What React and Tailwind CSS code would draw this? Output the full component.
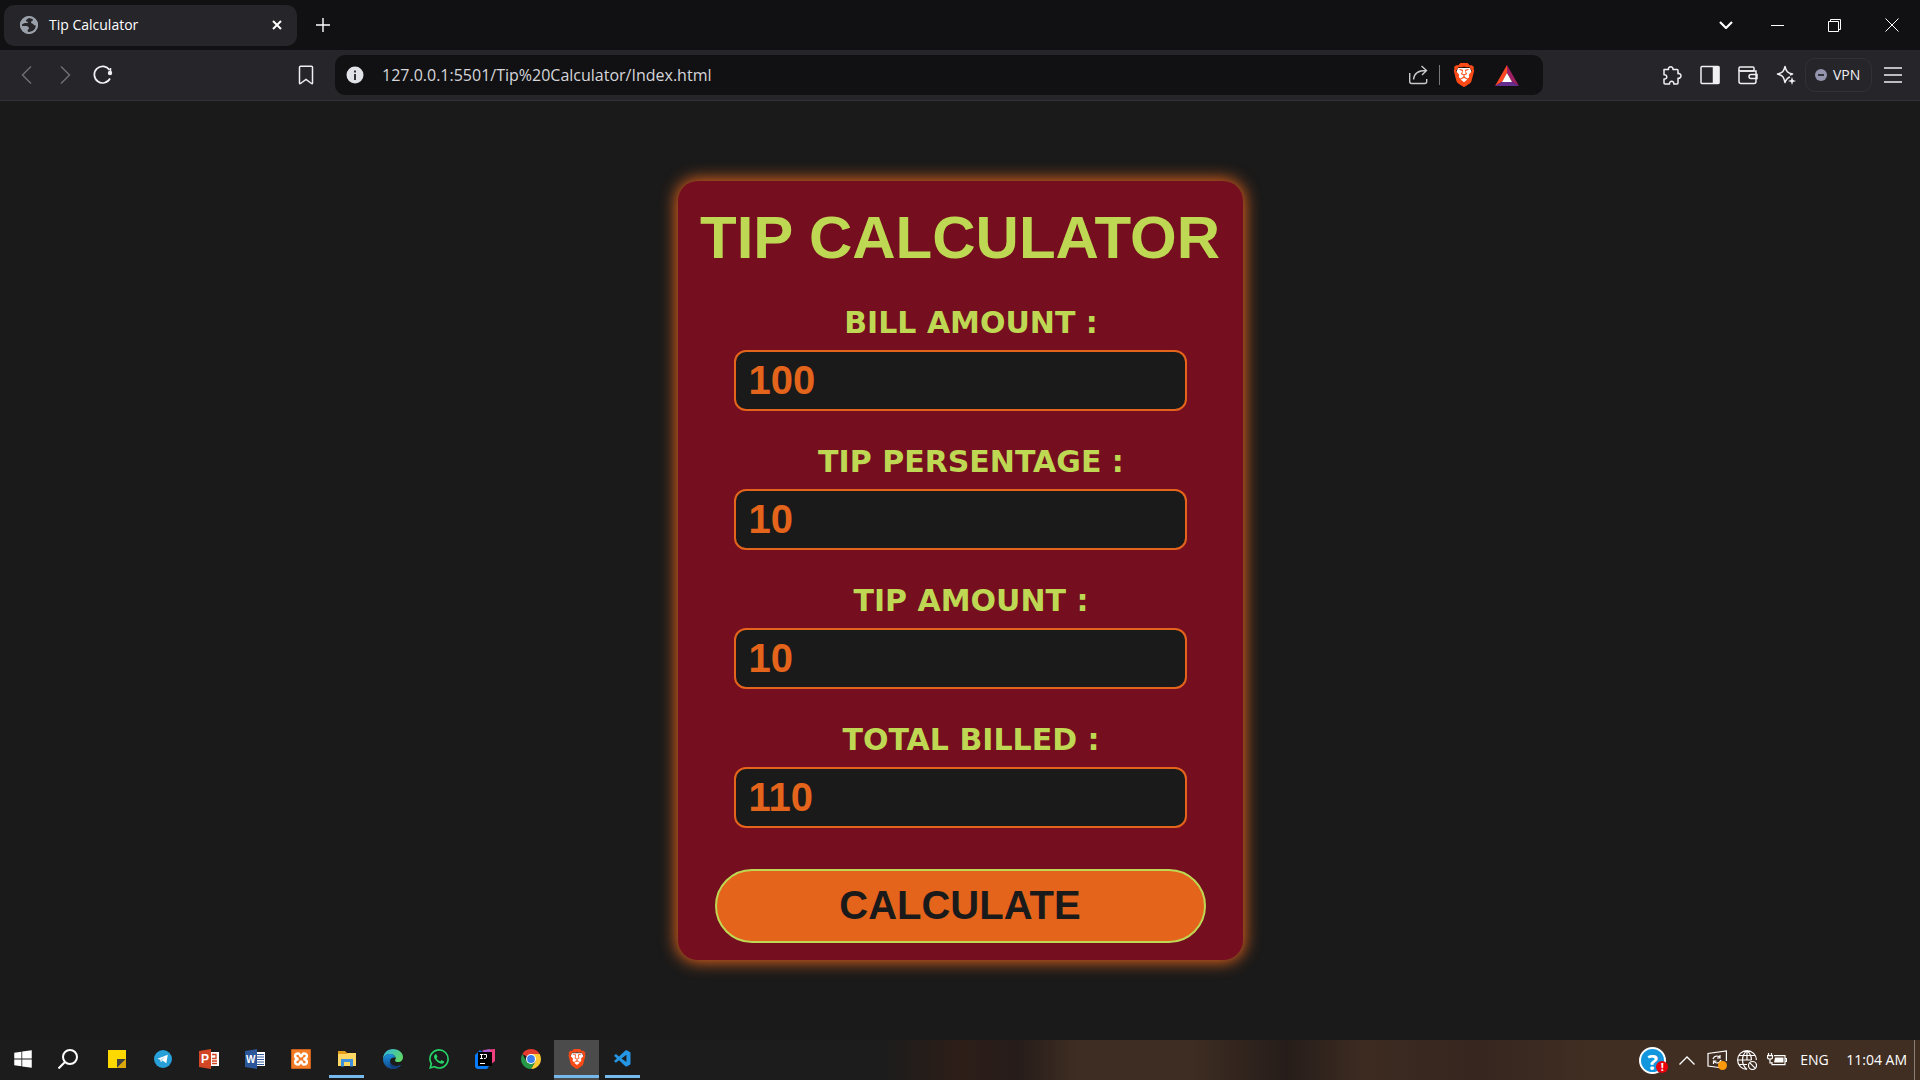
import React, { useState } from "react";
import { FaWindows } from "react-icons/fa";
import { SiBrave, SiWhatsapp } from "react-icons/si";
import { VscVscode } from "react-icons/vsc";

const FIELDS = [
  { id: "bill", label: "BILL AMOUNT :" },
  { id: "percentage", label: "TIP PERSENTAGE :" },
  { id: "tip", label: "TIP AMOUNT :", readOnly: true },
  { id: "total", label: "TOTAL BILLED :", readOnly: true },
];

function BraveLogo({ className }) {
  return (
    <span className={`relative grid place-items-center ${className}`}>
      <svg viewBox="0 0 24 24" className="absolute h-full w-full">
        <path d="M6 5h12l2 5-3 8-5 4-5-4-3-8z" fill="#fff" />
      </svg>
      <SiBrave className="relative h-full w-full text-[#fb4a16]" />
    </span>
  );
}

function TabStrip() {
  return (
    <div className="flex h-[50px] items-center bg-[#111113] text-white">
      <div className="ml-1 flex h-[41px] w-[293px] items-center rounded-[10px] bg-[#25252a] pl-4 pr-[10px]">
        <svg viewBox="0 0 18 18" className="h-[18px] w-[18px]">
          <circle cx="9" cy="9" r="9" fill="#9aa0a9" />
          <path d="M9 2c-1 1-3 1-3 3 0 1 2 0 2 2H5c-1 0-1 1-3 1v2h4c2 0 3 1 3 3-1 0-2 1-1 3 4 0 8-2 8-6 0-1-1 0-2-1-1-2-3-1-3-3 0-1 2-1 2-2s-1-2-4-2z" fill="#25252a" />
          <circle cx="9" cy="9" r="8" fill="none" stroke="#9aa0a9" strokeWidth="2" />
        </svg>
        <span className="ml-[11px] flex-1 text-[14px] leading-5">Tip Calculator</span>
        <button type="button" aria-label="Close tab" className="grid h-5 w-5 place-items-center">
          <svg viewBox="0 0 10 10" className="h-[10px] w-[10px]" stroke="#fff" strokeWidth="2" fill="none">
            <path d="M1 1l8 8M9 1l-8 8" />
          </svg>
        </button>
      </div>
      <button type="button" aria-label="New tab" className="ml-4 grid h-5 w-5 place-items-center">
        <svg viewBox="0 0 14 14" className="h-[14px] w-[14px]" stroke="#fff" strokeWidth="1.4" fill="none">
          <path d="M7 0v14M0 7h14" />
        </svg>
      </button>
      <div className="ml-auto flex">
        <button type="button" aria-label="Search tabs" className="grid h-[50px] w-[34px] place-items-center">
          <svg viewBox="0 0 14 8" className="h-2 w-[14px]" stroke="#fff" strokeWidth="2.2" fill="none">
            <path d="M1 1l6 6 6-6" />
          </svg>
        </button>
        <button type="button" aria-label="Minimize" className="ml-[6px] grid h-[50px] w-[57px] place-items-center">
          <span className="h-px w-[13px] bg-white" />
        </button>
        <button type="button" aria-label="Restore" className="grid h-[50px] w-[57px] place-items-center">
          <svg viewBox="0 0 13 13" className="h-[13px] w-[13px]" stroke="#fff" fill="none">
            <path d="M.5 2.5h10v10H.5zM2.5 2.5v-2h10v10h-2" />
          </svg>
        </button>
        <button type="button" aria-label="Close" className="grid h-[50px] w-[57px] place-items-center">
          <svg viewBox="0 0 14 14" className="h-[14px] w-[14px]" stroke="#fff" fill="none">
            <path d="M.5 .5l13 13M13.5 .5l-13 13" />
          </svg>
        </button>
      </div>
    </div>
  );
}

function IconButton({ label, className = "", children }) {
  return (
    <button type="button" aria-label={label} className={`grid h-[38px] w-[38px] shrink-0 place-items-center ${className}`}>
      <svg viewBox="0 0 20 20" className="h-5 w-5" fill="none" stroke="currentColor" strokeWidth="1.5">
        {children}
      </svg>
    </button>
  );
}

function Toolbar() {
  return (
    <div className="flex h-[51px] items-center border-b border-[#33323b] bg-[#25252a] text-[#f0f0f2]">
      <IconButton label="Back" className="ml-2 text-[#6d6d73]">
        <path d="M14 1.5L5.5 10l8.5 8.5" />
      </IconButton>
      <IconButton label="Forward" className="text-[#6d6d73]">
        <path d="M6 1.5l8.5 8.5L6 18.5" />
      </IconButton>
      <IconButton label="Reload">
        <path d="M17 13.500A8.300 8.300 0 1 1 16.500 5" strokeWidth="1.7" />
        <circle cx="17" cy="8" r="2.2" fill="currentColor" stroke="none" />
        <path d="M17.500 3v5" />
      </IconButton>
      <IconButton label="Bookmark this page" className="ml-[165px]">
        <path d="M4.500 1.200h11q1 0 1 1v15.500q0 1.500-1 .8L10 14.500l-5.500 4q-1 .7-1-.8V2.200q0-1 1-1z" />
      </IconButton>
      <div className="ml-[10px] flex h-10 flex-1 items-center rounded-[10px] bg-[#111113] pl-[11px] pr-6">
        <svg viewBox="0 0 18 18" className="h-[18px] w-[18px] shrink-0">
          <circle cx="9" cy="9" r="8.5" fill="#e2e2e9" />
          <path d="M9 4.500v2M9 8v6" stroke="#333339" strokeWidth="2" />
        </svg>
        <input
          aria-label="Address"
          defaultValue="127.0.0.1:5501/Tip%20Calculator/Index.html"
          className="ml-[18px] min-w-0 flex-1 bg-transparent text-[16px] leading-6 text-[#d6d6da] outline-none"
        />
        <div className="flex items-center">
          <button type="button" aria-label="Share" className="grid h-6 w-6 place-items-center text-[#c9c9cd]">
            <svg viewBox="0 0 20 20" className="h-5 w-5" fill="none" stroke="currentColor" strokeWidth="1.4">
              <path d="M1.700 8v8.500q0 2 2 2h13q2 0 2-2V14" />
              <path d="M5.500 14.500C6 8 10 5.500 18 5.500M13.500 1l5 4.500-4.500 4.500" />
            </svg>
          </button>
          <span className="ml-[9px] h-5 w-px bg-[#77777c]" />
          <button type="button" aria-label="Brave Shields" className="ml-3">
            <BraveLogo className="h-6 w-6" />
          </button>
          <button type="button" aria-label="Brave Rewards" className="ml-[19px]">
            <svg viewBox="0 0 24 21" className="h-[21px] w-6">
              <path d="M12 0L0 21l7.500-4.500L12 8z" fill="#ff4724" />
              <path d="M12 0l12 21-7.500-4.500L12 8z" fill="#9e1f63" />
              <path d="M0 21h24l-7.500-4.500h-9z" fill="#662d91" />
              <path d="M12 8l5 9H7z" fill="#fff" />
            </svg>
          </button>
        </div>
      </div>
      <IconButton label="Extensions" className="ml-[110px]">
        <path d="M2 4.500h4.500c-.8-3.700 5-3.700 4.500 0h4q1 0 1 1v3.200c4-.8 4 5 0 4.600V18q0 1-1 1h-3.200c.6-3.600-4.700-3.600-4.300 0H3q-1 0-1-1v-4c3.700.4 3.700-4.600 0-4.300z" strokeLinejoin="round" />
      </IconButton>
      <IconButton label="Side panel">
        <rect x="1" y="1.5" width="18" height="17" rx="1" />
        <path d="M13.500 2h5v16h-5z" fill="currentColor" />
      </IconButton>
      <IconButton label="Wallet">
        <rect x="1" y="2" width="15" height="4" rx="1" />
        <path d="M1 5v11.500q0 2 2 2h13q2 0 2-2V6H2M19 9.500h-6q-2 0-2 2t2 2h6z" />
      </IconButton>
      <IconButton label="Leo AI">
        <path d="M14 12c-3 1-4 2.500-5 5.500C7.800 11.500 6.500 10.200 1.500 9 6.500 7.800 7.800 6.500 9 1.500c1.200 5 2.500 6.300 7.500 7.500L14 10" strokeLinejoin="round" />
        <path d="M16 12l1 3 3 1-3 1-1 3-1-3-3-1 3-1z" fill="currentColor" stroke="none" />
      </IconButton>
      <button type="button" className="flex h-[34px] w-[67px] items-center gap-[6px] rounded-[10px] border border-[#313137] pl-[9px] text-[14px] leading-5">
        <span className="grid h-3 w-3 place-items-center rounded-full bg-[#9494ac]">
          <span className="h-[2px] w-[6px] bg-[#33333b]" />
        </span>
        VPN
      </button>
      <IconButton label="Menu" className="ml-[2px] mr-2">
        <path d="M1 3h18M1 10h18M1 17h18" />
      </IconButton>
    </div>
  );
}

function TipCalculator() {
  const [values, setValues] = useState({ bill: "100", percentage: "10", tip: "10", total: "110" });

  const handleChange = (e) => setValues({ ...values, [e.target.id]: e.target.value });

  const handleSubmit = (e) => {
    e.preventDefault();
    const bill = Number(values.bill) || 0;
    const tip = (bill * (Number(values.percentage) || 0)) / 100;
    setValues({ ...values, tip: String(tip), total: String(bill + tip) });
  };

  return (
    <form
      onSubmit={handleSubmit}
      className="flex w-[565px] max-w-full flex-col gap-[31px] rounded-[20px] bg-[#750e1f] pb-[17px] pt-[23px] font-['Liberation_Sans',Arial,sans-serif] font-bold shadow-[0_0_16px_2px_#e4641c]"
    >
      <h1 className="whitespace-nowrap text-center text-[60px] leading-[68px] text-[#bfd853]">TIP CALCULATOR</h1>
      {FIELDS.map(({ id, label, readOnly }) => (
        <div key={id} className="mx-14 flex flex-col gap-[7px]">
          <label
            htmlFor={id}
            className="pl-[22px] text-center font-['DejaVu_Sans',sans-serif] text-[30px] font-bold leading-10 text-[#bfd853]"
          >
            {label}
          </label>
          <input
            id={id}
            type="text"
            value={values[id]}
            onChange={handleChange}
            readOnly={readOnly}
            className="h-[61px] w-full rounded-xl border-2 border-[#e4641c] bg-[#1a1a1a] px-[13px] text-[40px] text-[#e4641c] outline-none"
          />
        </div>
      ))}
      <button
        type="submit"
        className="mx-[37px] mt-[10px] h-[74px] rounded-full border-2 border-[#bfd853] bg-[#e4641c] pb-[2px] text-[40px] text-[#1a1a1a]"
      >
        CALCULATE
      </button>
    </form>
  );
}

const SYSTEM_TASKS = [
  { name: "Start", icon: <FaWindows className="h-5 w-5 text-white" /> },
  {
    name: "Search",
    icon: (
      <svg viewBox="0 0 20 20" className="h-5 w-5" fill="none" stroke="#fff" strokeWidth="2">
        <circle cx="12" cy="8" r="7" />
        <path d="M7 13l-6.500 6.500" />
      </svg>
    ),
  },
];

const APP_TASKS = [
  {
    name: "Sticky Notes",
    icon: (
      <svg viewBox="0 0 18 18" className="h-[18px] w-[18px]">
        <path d="M0 0h18v18H0z" fill="#fdd900" />
        <path d="M9 9h9l-9 9z" fill="#404040" />
        <path d="M18 9v9H9z" fill="#dba50c" />
      </svg>
    ),
  },
  {
    name: "Telegram",
    icon: (
      <svg viewBox="0 0 18 18" className="h-[18px] w-[18px]">
        <circle cx="9" cy="9" r="9" fill="#279fd9" />
        <path d="M3.500 8.800L13.800 4.700 12.300 13.200 8.500 10.500 7 12.300 6.300 9.800z" fill="#fff" />
        <path d="M6.300 9.800l5.500-3.500-4.300 4.200-.5 1.800z" fill="#b3d3e8" />
      </svg>
    ),
  },
  {
    name: "PowerPoint",
    icon: (
      <svg viewBox="0 0 20 20" className="h-5 w-5">
        <path d="M10 3h10v14H10z" fill="#fff" />
        <path d="M13 5.500h4v4h-4M13 12h5M13 14.500h5M17 5v5" stroke="#d24625" strokeWidth="1.3" fill="none" />
        <path d="M0 2l12-2v20L0 18z" fill="#d24625" />
        <text x="2" y="14" fontSize="12" fontWeight="700" fontFamily="Liberation Sans" fill="#fff">P</text>
      </svg>
    ),
  },
  {
    name: "Word",
    icon: (
      <svg viewBox="0 0 20 20" className="h-5 w-5">
        <path d="M10 3h10v14H10z" fill="#fff" />
        <path d="M12 5.500h7M12 8h7M12 10.500h7M12 13h7M12 15.500h7" stroke="#2b579a" />
        <path d="M0 2l12-2v20L0 18z" fill="#2b579a" />
        <text x="1" y="14" fontSize="10" fontWeight="700" fontFamily="Liberation Sans" fill="#fff">W</text>
      </svg>
    ),
  },
  {
    name: "XAMPP",
    icon: (
      <svg viewBox="0 0 20 20" className="h-5 w-5" fill="none">
        <rect width="20" height="20" rx="1" fill="#c9601c" />
        <rect x="1" y="1" width="18" height="18" rx="1" fill="#f47b26" />
        <path d="M7.500 10c-5-1-4-6 0-5.500 2 .5 1 3 2.500 3s.5-2.500 2.500-3c4-.5 5 4.500 0 5.500 5 1 4 6 0 5.500-2-.5-1-3-2.500-3s-.5 2.500-2.500 3c-4 .5-5-4.500 0-5.500z" stroke="#fff" strokeWidth="2.4" />
      </svg>
    ),
  },
  {
    name: "File Explorer",
    open: true,
    icon: (
      <svg viewBox="0 0 18 18" className="h-[18px] w-[18px]">
        <path d="M0 1h7l2 2h9v5H0z" fill="#e3a11b" />
        <path d="M0 4h8l2-1h8v13H0z" fill="#ffd765" />
        <path d="M3 16.500V9h12v7.500h-3V12H6v4.500z" fill="#3e91dc" />
      </svg>
    ),
  },
  {
    name: "Edge",
    icon: (
      <svg viewBox="0 0 20 20" className="h-5 w-5">
        <defs>
          <linearGradient id="edgeTop" x1="0" y1="0" x2="1" y2="0.5">
            <stop offset="0" stopColor="#2fb2e8" />
            <stop offset="1" stopColor="#5ed66b" />
          </linearGradient>
          <linearGradient id="edgeLow" x1="0" y1="0" x2="0" y2="1">
            <stop offset="0" stopColor="#1b8fdc" />
            <stop offset="1" stopColor="#114a8b" />
          </linearGradient>
        </defs>
        <path d="M0 10C0 4 4.500 0 10 0c6 0 10 4 10 8 0 3-2 5-4.500 5-2 0-3.500-.5-3.500-1.500 0-.7.8-1 .8-2.200C12.800 7 10 5 7 5 3.500 5 1 7 0 10z" fill="url(#edgeTop)" />
        <path d="M0 10C1 7 3.500 5 7 5c3 0 5.500 2 5.500 4C11 8 7 8.500 7 12.500c0 4 4 6 8 4.500 1-.5 2.500-1 3-1-1.800 2.500-4.500 4-8 4C4.500 20 0 16 0 10z" fill="url(#edgeLow)" />
        <path d="M7 12.500C6 16.500 9 20 12 19.800c2.500-.5 4.500-1.800 6-3.800-4 2-9.500 1-11-3.500z" fill="#123f7b" />
      </svg>
    ),
  },
  { name: "WhatsApp", icon: <SiWhatsapp className="h-5 w-5 text-[#25d366]" /> },
  {
    name: "IntelliJ IDEA",
    icon: (
      <svg viewBox="0 0 20 20" className="h-5 w-5">
        <path d="M8 1l12-1v12l-6 5z" fill="#f2407f" />
        <path d="M6 2l9-2v5z" fill="#a95fd0" />
        <path d="M0 6l5-5 12 12-5 7H2l-2-2z" fill="#087cfa" />
        <path d="M3 3h14v14H3z" fill="#000" />
        <path d="M5 5.500h3M6.500 5.500v4M5 9.500h3M8.500 5.500h3v3q0 1-2.500 1M5 14.500h5" stroke="#fff" fill="none" />
      </svg>
    ),
  },
  {
    name: "Chrome",
    icon: (
      <svg viewBox="0 0 20 20" className="h-5 w-5">
        <path d="M10 10L1.340 5A10 10 0 0 1 18.660 5z" fill="#e33b2e" />
        <path d="M10 5h8.660A10 10 0 0 1 10 20l4.330-7.500z" fill="#fcc934" />
        <path d="M5.670 12.500L1.340 5A10 10 0 0 0 10 20l4.330-7.500z" fill="#279847" />
        <circle cx="10" cy="10" r="5" fill="#fff" />
        <circle cx="10" cy="10" r="3.9" fill="#3b7ded" />
      </svg>
    ),
  },
  { name: "Brave", open: true, active: true, icon: <BraveLogo className="h-5 w-5" /> },
  { name: "Visual Studio Code", open: true, icon: <VscVscode className="h-5 w-5 text-[#2496e4]" /> },
];

function TaskButton({ name, icon, open, active }) {
  return (
    <button
      type="button"
      aria-label={name}
      className={`relative grid h-10 w-[45px] place-items-center pb-[2px] ${active ? "bg-[#4b4b4b]" : ""}`}
    >
      {icon}
      {open && <span className={`absolute bottom-[2px] h-[3px] bg-[#76b9ed] ${active ? "inset-x-0" : "inset-x-[5px]"}`} />}
    </button>
  );
}

function Taskbar() {
  return (
    <footer className="flex h-10 items-center bg-[linear-gradient(90deg,#1c1c1c_46%,#2d1e18_50%,#261c1a_53%,#3e2d22_56%,#3e2d22_62%,#261d1a_67%,#3d2b21_71%,#36261f_77%,#412e23_83%)] pr-[5px] text-white">
      <div className="flex">
        {SYSTEM_TASKS.map((task) => (
          <TaskButton key={task.name} {...task} />
        ))}
      </div>
      <div className="ml-1 flex gap-px">
        {APP_TASKS.map((task) => (
          <TaskButton key={task.name} {...task} />
        ))}
      </div>
      <div className="ml-auto flex h-full items-center">
        <span className="relative grid h-[27px] w-[27px] place-items-center rounded-full border-2 border-white bg-[#1296dd] text-[22px] font-bold leading-6">
          ?
          <span className="absolute -bottom-px -right-1 grid h-3 w-3 place-items-center rounded-full bg-[#e8000b] text-[11px] leading-3">
            !
          </span>
        </span>
        <svg viewBox="0 0 16 9" className="ml-[13px] h-[9px] w-4" fill="none" stroke="#fff" strokeWidth="1.3">
          <path d="M.5 8.500L8 1l7.500 7.500" />
        </svg>
        <svg viewBox="0 0 20 20" className="ml-3 h-5 w-5" fill="none" stroke="#fff" strokeWidth="1.2">
          <path d="M12 17.500L1 16V3.500L19.400 1v10" />
          <path d="M6 9q1-3 4-3 2 0 3 2M13 5v3h-3M14 10q-1 3-4 3-2 0-3-2M6.500 14v-3h3" />
          <circle cx="15.5" cy="15.5" r="4.5" fill="#ff9b0a" stroke="none" />
        </svg>
        <svg viewBox="0 0 20 20" className="ml-[10px] h-5 w-5" fill="none" stroke="#fff" strokeWidth="1.2">
          <path d="M10 19.400A9.400 9.400 0 1 1 19.400 10M10 19.400c-6-5-6-14 0-18.800 3 2.500 4.500 6 4.500 9.400M10 .6v10M.6 10h14M2 5.500h16M2 14.500h8" />
          <circle cx="15.5" cy="15.5" r="4" />
          <path d="M12.700 12.700l5.600 5.600" />
        </svg>
        <svg viewBox="0 0 20 14" className="ml-[10px] h-[14px] w-5" fill="none" stroke="#fff" strokeWidth="1.2">
          <path d="M7 2.600h11v9H5V9M18.500 5.500h1v3h-1M1.500 0v2.500M4.500 0v2.500M.5 2.600h5v2q0 1.500-2.500 1.500T.5 4.600zM3 6v4h2" />
          <path d="M8 4.600h8.500v5H7z" fill="#fff" stroke="none" />
        </svg>
        <span className="ml-[13px] w-[46px] text-[14px] leading-5">ENG</span>
        <span className="text-[14px] leading-5">11:04 AM</span>
        <span className="ml-[7px] h-full w-px bg-[#8a7f78]" />
      </div>
    </footer>
  );
}

export default function App() {
  return (
    <div className="flex min-h-screen flex-col bg-[#1a1a1a] font-['Open_Sans','Noto_Sans',sans-serif]">
      <header>
        <TabStrip />
        <Toolbar />
      </header>
      <main className="flex flex-1 items-center justify-center">
        <TipCalculator />
      </main>
      <Taskbar />
    </div>
  );
}
